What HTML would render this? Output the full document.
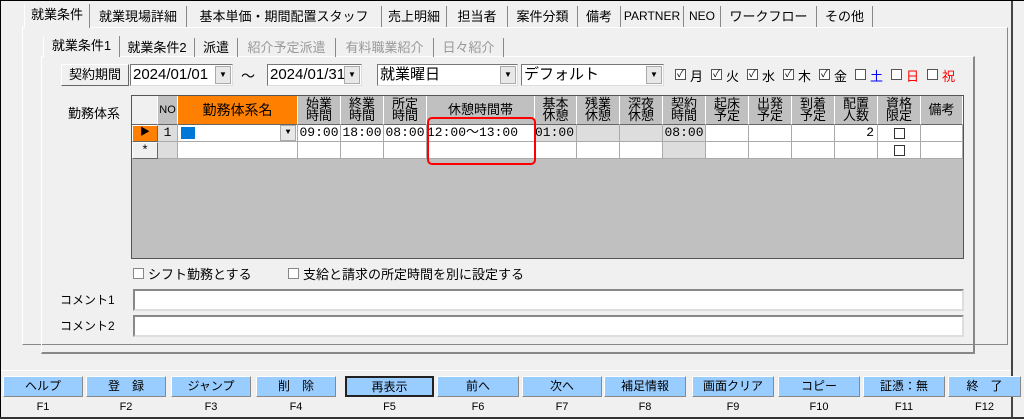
<!DOCTYPE html><html><head><meta charset="utf-8"><style>
*{box-sizing:border-box;margin:0;padding:0}
body{width:1024px;height:419px;background:#f0f0f0;font-family:"Liberation Sans","Noto Sans CJK JP",sans-serif;font-size:13px;color:#000;position:relative;overflow:hidden}
.a{position:absolute}
.tab{position:absolute;top:6px;height:21px;line-height:21px;text-align:center;border-right:1px solid #888;font-size:13px}
.st{position:absolute;top:38px;height:19px;line-height:19px;text-align:center;border-right:1px solid #888;font-size:13px}
.g{color:#999}
.cb{position:absolute;width:11px;height:11px;border:1px solid #555;background:#fff;font-size:10px;line-height:9px;text-align:center}
.combo{position:absolute;background:#fff;border:1px solid #777;border-right-color:#ddd;border-bottom-color:#ddd;height:22px;font-size:15px;line-height:20px;padding-left:2px}
.dd{position:absolute;right:1px;top:1px;width:16px;height:18px;background:#e8e8e8;border:1px solid #aaa;font-size:8px;line-height:16px;text-align:center}
.h{position:absolute;top:96px;height:29px;background:#c0c0c0;border-right:1px solid #fff;border-bottom:1px solid #666;font-size:13px;line-height:12px;text-align:center;padding-top:2px}
.c{position:absolute;height:17px;background:#fff;border-right:1px solid #aaa;border-bottom:1px solid #aaa;font-size:13px;line-height:16px;font-family:"Liberation Mono","Noto Sans CJK JP",monospace}
.btn{position:absolute;top:376px;height:21px;background:#99ccff;border:1px solid #fff;border-right-color:#888;border-bottom-color:#888;text-align:center;line-height:19px;font-size:12px}
.fk{position:absolute;top:401px;font-size:11px;text-align:center}
</style></head><body>
<div class="a" style="left:0;top:0;width:1px;height:419px;background:#000"></div>
<div class="a" style="left:1011px;top:0;width:2px;height:419px;background:#444"></div>
<div class="a" style="left:0;top:0;width:1024px;height:1px;background:#000"></div>
<div class="a" style="left:0;top:417px;width:1024px;height:2px;background:#333"></div>
<!-- top tabs -->
<div class="a" style="left:22px;top:27px;width:986px;height:318px;border:1px solid #fff;border-right-color:#888;border-bottom-color:#888"></div>
<div class="tab" style="left:24px;top:4px;height:24px;width:66px;background:#f0f0f0;border-left:1px solid #fff">就業条件</div>
<div class="tab" style="left:90px;width:97px">就業現場詳細</div>
<div class="tab" style="left:187px;width:195px">基本単価・期間配置スタッフ</div>
<div class="tab" style="left:382px;width:65px">売上明細</div>
<div class="tab" style="left:447px;width:61px">担当者</div>
<div class="tab" style="left:508px;width:70px">案件分類</div>
<div class="tab" style="left:578px;width:43px">備考</div>
<div class="tab" style="left:621px;width:63px;font-size:12px">PARTNER</div>
<div class="tab" style="left:684px;width:37px;font-size:12px">NEO</div>
<div class="tab" style="left:721px;width:96px">ワークフロー</div>
<div class="tab" style="left:817px;width:56px">その他</div>
<!-- inner panel -->
<div class="a" style="left:41px;top:56px;width:934px;height:298px;border:1px solid #fff;border-right:2px solid #888;border-bottom:2px solid #888"></div>
<div class="st" style="left:43px;top:36px;height:21px;width:77px;background:#f0f0f0;border-left:1px solid #fff">就業条件1</div>
<div class="st" style="left:120px;width:75px">就業条件2</div>
<div class="st" style="left:195px;width:43px">派遣</div>
<div class="st g" style="left:238px;width:98px">紹介予定派遣</div>
<div class="st g" style="left:336px;width:98px">有料職業紹介</div>
<div class="st g" style="left:434px;width:70px">日々紹介</div>
<!-- row controls -->
<div class="a" style="left:61px;top:64px;width:68px;height:22px;border:1px solid #fff;border-right-color:#666;border-bottom-color:#666;text-align:center;line-height:20px;font-size:13px">契約期間</div>
<div class="combo" style="left:130px;top:64px;width:103px">2024/01/01<div class="dd">▼</div></div>
<div class="a" style="left:241px;top:66px;font-size:14px">～</div>
<div class="combo" style="left:267px;top:64px;width:95px">2024/01/31<div class="dd">▼</div></div>
<div class="combo" style="left:377px;top:64px;width:141px">就業曜日<div class="dd">▼</div></div>
<div class="combo" style="left:521px;top:64px;width:143px">デフォルト<div class="dd">▼</div></div>
<div class="cb" style="left:675px;top:69px">✓</div><div class="a" style="left:690px;top:66px">月</div>
<div class="cb" style="left:711px;top:69px">✓</div><div class="a" style="left:726px;top:66px">火</div>
<div class="cb" style="left:747px;top:69px">✓</div><div class="a" style="left:762px;top:66px">水</div>
<div class="cb" style="left:783px;top:69px">✓</div><div class="a" style="left:798px;top:66px">木</div>
<div class="cb" style="left:819px;top:69px">✓</div><div class="a" style="left:834px;top:66px">金</div>
<div class="cb" style="left:855px;top:69px"></div><div class="a" style="left:870px;top:66px;color:#00f">土</div>
<div class="cb" style="left:891px;top:69px"></div><div class="a" style="left:906px;top:66px;color:#f00">日</div>
<div class="cb" style="left:927px;top:69px"></div><div class="a" style="left:942px;top:66px;color:#f00">祝</div>
<div class="a" style="left:68px;top:103px">勤務体系</div>
<!-- grid -->
<div class="a" style="left:131px;top:95px;width:833px;height:164px;background:#c0c0c0;border:1px solid #555"></div>
<div class="h" style="left:132px;width:26px;background:#f0f0f0"></div>
<div class="h" style="left:158px;width:20px;line-height:24px;font-size:11px">NO</div>
<div class="h" style="left:178px;width:120px;background:#ff8000;line-height:24px;font-size:14px">勤務体系名</div>
<div class="h" style="left:298px;width:43px">始業<br>時間</div>
<div class="h" style="left:341px;width:43px">終業<br>時間</div>
<div class="h" style="left:384px;width:43px">所定<br>時間</div>
<div class="h" style="left:427px;width:108px;line-height:24px">休憩時間帯</div>
<div class="h" style="left:535px;width:42px">基本<br>休憩</div>
<div class="h" style="left:577px;width:43px">残業<br>休憩</div>
<div class="h" style="left:620px;width:43px">深夜<br>休憩</div>
<div class="h" style="left:663px;width:43px">契約<br>時間</div>
<div class="h" style="left:706px;width:43px">起床<br>予定</div>
<div class="h" style="left:749px;width:43px">出発<br>予定</div>
<div class="h" style="left:792px;width:43px">到着<br>予定</div>
<div class="h" style="left:835px;width:43px">配置<br>人数</div>
<div class="h" style="left:878px;width:43px">資格<br>限定</div>
<div class="h" style="left:921px;width:42px;line-height:24px">備考</div>
<!-- row 1 -->
<div class="c" style="left:132px;top:125px;width:26px;background:#ff8000;border:1px solid #fff;border-right-color:#666;border-bottom-color:#666;font-size:10px;text-align:center">▶</div>
<div class="c" style="left:158px;top:125px;width:20px;background:#ddd;text-align:center">1</div>
<div class="c" style="left:178px;top:125px;width:120px"><div class="a" style="left:3px;top:2px;width:14px;height:12px;background:#0078d7"></div><div class="dd" style="top:0;height:16px;line-height:14px">▼</div></div>
<div class="c" style="left:298px;top:125px;width:43px;text-align:center">09:00</div>
<div class="c" style="left:341px;top:125px;width:43px;text-align:center">18:00</div>
<div class="c" style="left:384px;top:125px;width:43px;text-align:center">08:00</div>
<div class="c" style="left:427px;top:125px;width:108px">12:00～13:00</div>
<div class="c" style="left:535px;top:125px;width:42px;background:#ddd">01:00</div>
<div class="c" style="left:577px;top:125px;width:43px;background:#ddd"></div>
<div class="c" style="left:620px;top:125px;width:43px;background:#ddd"></div>
<div class="c" style="left:663px;top:125px;width:43px;background:#ddd;text-align:center">08:00</div>
<div class="c" style="left:706px;top:125px;width:43px"></div>
<div class="c" style="left:749px;top:125px;width:43px"></div>
<div class="c" style="left:792px;top:125px;width:43px"></div>
<div class="c" style="left:835px;top:125px;width:43px;text-align:right;padding-right:3px">2</div>
<div class="c" style="left:878px;top:125px;width:43px"><div class="cb" style="left:16px;top:3px;border-color:#333"></div></div>
<div class="c" style="left:921px;top:125px;width:42px"></div>
<!-- row 2 -->
<div class="c" style="left:132px;top:142px;width:26px;background:#f0f0f0;border:1px solid #fff;border-right-color:#666;border-bottom-color:#666;text-align:center">*</div>
<div class="c" style="left:158px;top:142px;width:20px;background:#ddd"></div>
<div class="c" style="left:178px;top:142px;width:120px"></div>
<div class="c" style="left:298px;top:142px;width:43px"></div>
<div class="c" style="left:341px;top:142px;width:43px"></div>
<div class="c" style="left:384px;top:142px;width:43px"></div>
<div class="c" style="left:427px;top:142px;width:108px"></div>
<div class="c" style="left:535px;top:142px;width:42px"></div>
<div class="c" style="left:577px;top:142px;width:43px"></div>
<div class="c" style="left:620px;top:142px;width:43px"></div>
<div class="c" style="left:663px;top:142px;width:43px;background:#ddd"></div>
<div class="c" style="left:706px;top:142px;width:43px"></div>
<div class="c" style="left:749px;top:142px;width:43px"></div>
<div class="c" style="left:792px;top:142px;width:43px"></div>
<div class="c" style="left:835px;top:142px;width:43px"></div>
<div class="c" style="left:878px;top:142px;width:43px"><div class="cb" style="left:16px;top:3px;border-color:#333"></div></div>
<div class="c" style="left:921px;top:142px;width:42px"></div>
<div class="a" style="left:427px;top:117px;width:109px;height:48px;border:2px solid #f00;border-radius:5px"></div>
<!-- checkboxes -->
<div class="cb" style="left:133px;top:268px;border-color:#888"></div><div class="a" style="left:148px;top:264px;font-size:13px">シフト勤務とする</div>
<div class="cb" style="left:288px;top:268px;border-color:#888"></div><div class="a" style="left:303px;top:264px;font-size:13px">支給と請求の所定時間を別に設定する</div>
<div class="a" style="left:60px;top:291px;font-size:12px">コメント1</div>
<div class="a" style="left:133px;top:289px;width:831px;height:22px;background:#fff;border:2px solid #888;border-right-color:#ddd;border-bottom-color:#ddd"></div>
<div class="a" style="left:60px;top:317px;font-size:12px">コメント2</div>
<div class="a" style="left:133px;top:315px;width:831px;height:22px;background:#fff;border:2px solid #888;border-right-color:#ddd;border-bottom-color:#ddd"></div>
<!-- buttons -->
<div class="a" style="left:1px;top:370px;width:1010px;height:1px;background:#fff"></div>
<div class="btn" style="left:3px;width:80px">ヘルプ</div>
<div class="btn" style="left:86px;width:80px">登　録</div>
<div class="btn" style="left:171px;width:80px">ジャンプ</div>
<div class="btn" style="left:256px;width:80px">削　除</div>
<div class="btn" style="left:345px;width:89px;border:2px solid #222">再表示</div>
<div class="btn" style="left:437px;width:82px">前へ</div>
<div class="btn" style="left:522px;width:80px">次へ</div>
<div class="btn" style="left:604px;width:82px">補足情報</div>
<div class="btn" style="left:692px;width:82px">画面クリア</div>
<div class="btn" style="left:778px;width:82px">コピー</div>
<div class="btn" style="left:863px;width:82px">証憑：無</div>
<div class="btn" style="left:948px;width:73px">終　了</div>
<div class="fk" style="left:3px;width:80px">F1</div>
<div class="fk" style="left:86px;width:80px">F2</div>
<div class="fk" style="left:171px;width:80px">F3</div>
<div class="fk" style="left:256px;width:80px">F4</div>
<div class="fk" style="left:345px;width:89px">F5</div>
<div class="fk" style="left:437px;width:82px">F6</div>
<div class="fk" style="left:522px;width:80px">F7</div>
<div class="fk" style="left:604px;width:82px">F8</div>
<div class="fk" style="left:692px;width:82px">F9</div>
<div class="fk" style="left:778px;width:82px">F10</div>
<div class="fk" style="left:863px;width:82px">F11</div>
<div class="fk" style="left:948px;width:73px">F12</div>
</body></html>
